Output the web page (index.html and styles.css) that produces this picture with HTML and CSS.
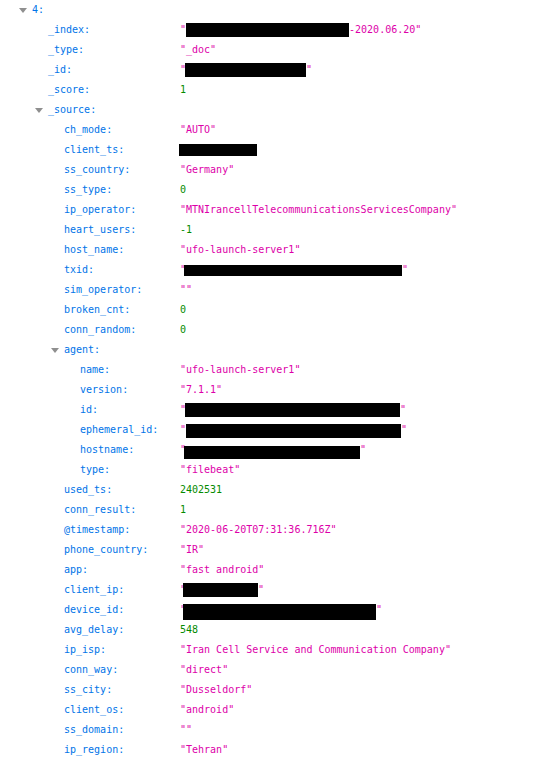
FILE: index.html
```html
<!DOCTYPE html>
<html>
<head>
<meta charset="utf-8">
<link rel="stylesheet" href="styles.css">
</head>
<body>
<div class="tree">
  <div class="row"><div class="key l0"><span class="twisty"></span>4:</div><div class="val"></div></div>
  <div class="row"><div class="key l1">_index:</div><div class="val str"><span>"</span><span class="redact r-index"></span><span>-2020.06.20"</span></div></div>
  <div class="row"><div class="key l1">_type:</div><div class="val str">"_doc"</div></div>
  <div class="row"><div class="key l1">_id:</div><div class="val str"><span>"</span><span class="redact r-id"></span><span>"</span></div></div>
  <div class="row"><div class="key l1">_score:</div><div class="val num">1</div></div>
  <div class="row"><div class="key l1"><span class="twisty"></span>_source:</div><div class="val"></div></div>
  <div class="row"><div class="key l2">ch_mode:</div><div class="val str">"AUTO"</div></div>
  <div class="row"><div class="key l2">client_ts:</div><div class="val"><span class="redact r-cts"></span></div></div>
  <div class="row"><div class="key l2">ss_country:</div><div class="val str">"Germany"</div></div>
  <div class="row"><div class="key l2">ss_type:</div><div class="val num">0</div></div>
  <div class="row"><div class="key l2">ip_operator:</div><div class="val str">"MTNIrancellTelecommunicationsServicesCompany"</div></div>
  <div class="row"><div class="key l2">heart_users:</div><div class="val num">-1</div></div>
  <div class="row"><div class="key l2">host_name:</div><div class="val str">"ufo-launch-server1"</div></div>
  <div class="row"><div class="key l2">txid:</div><div class="val str"><span>"</span><span class="redact r-txid"></span><span>"</span></div></div>
  <div class="row"><div class="key l2">sim_operator:</div><div class="val str">""</div></div>
  <div class="row"><div class="key l2">broken_cnt:</div><div class="val num">0</div></div>
  <div class="row"><div class="key l2">conn_random:</div><div class="val num">0</div></div>
  <div class="row"><div class="key l2"><span class="twisty"></span>agent:</div><div class="val"></div></div>
  <div class="row"><div class="key l3">name:</div><div class="val str">"ufo-launch-server1"</div></div>
  <div class="row"><div class="key l3">version:</div><div class="val str">"7.1.1"</div></div>
  <div class="row"><div class="key l3">id:</div><div class="val str"><span>"</span><span class="redact r-aid"></span><span>"</span></div></div>
  <div class="row"><div class="key l3">ephemeral_id:</div><div class="val str"><span>"</span><span class="redact r-eph"></span><span>"</span></div></div>
  <div class="row"><div class="key l3">hostname:</div><div class="val str"><span>"</span><span class="redact r-host"></span><span>"</span></div></div>
  <div class="row"><div class="key l3">type:</div><div class="val str">"filebeat"</div></div>
  <div class="row"><div class="key l2">used_ts:</div><div class="val num">2402531</div></div>
  <div class="row"><div class="key l2">conn_result:</div><div class="val num">1</div></div>
  <div class="row"><div class="key l2">@timestamp:</div><div class="val str">"2020-06-20T07:31:36.716Z"</div></div>
  <div class="row"><div class="key l2">phone_country:</div><div class="val str">"IR"</div></div>
  <div class="row"><div class="key l2">app:</div><div class="val str">"fast android"</div></div>
  <div class="row"><div class="key l2">client_ip:</div><div class="val str"><span>"</span><span class="redact r-cip"></span><span>"</span></div></div>
  <div class="row"><div class="key l2">device_id:</div><div class="val str"><span>"</span><span class="redact r-dev"></span><span>"</span></div></div>
  <div class="row"><div class="key l2">avg_delay:</div><div class="val num">548</div></div>
  <div class="row"><div class="key l2">ip_isp:</div><div class="val str">"Iran Cell Service and Communication Company"</div></div>
  <div class="row"><div class="key l2">conn_way:</div><div class="val str">"direct"</div></div>
  <div class="row"><div class="key l2">ss_city:</div><div class="val str">"Dusseldorf"</div></div>
  <div class="row"><div class="key l2">client_os:</div><div class="val str">"android"</div></div>
  <div class="row"><div class="key l2">ss_domain:</div><div class="val str">""</div></div>
  <div class="row"><div class="key l2">ip_region:</div><div class="val str">"Tehran"</div></div>
</div>
</body>
</html>
```
FILE: styles.css
```css
html, body {
  margin: 0;
  padding: 0;
  background: #ffffff;
}
.tree {
  font-family: "DejaVu Sans Mono", "Liberation Mono", monospace;
  font-size: 10px;
  display: flex;
  flex-direction: column;
}
.row {
  display: flex;
  height: 20px;
  line-height: 20px;
}
.key {
  width: 180px;
  box-sizing: border-box;
  color: #0074e8;
  white-space: pre;
  display: flex;
  align-items: center;
}
.l0 { padding-left: 32px; }
.l1 { padding-left: 48px; }
.l2 { padding-left: 64px; }
.l3 { padding-left: 80px; }
.twisty {
  width: 0;
  height: 0;
  border-left: 4px solid transparent;
  border-right: 4px solid transparent;
  border-top: 5px solid #8f8f8f;
  margin-left: -13px;
  margin-right: 5px;
  margin-top: 1px;
}
.val {
  display: flex;
  align-items: center;
  white-space: pre;
}
.str { color: #dd00a9; }
.num { color: #058b00; }
.redact {
  display: inline-block;
  background: #000;
}
.r-index { width: 163px; height: 14px; }
.r-id { width: 121px; height: 14px; margin-left: -1px; }
.r-cts { width: 78px; height: 12px; margin-left: -1px; }
.r-txid { width: 218px; height: 11px; margin-left: -2px; }
.r-aid { width: 215px; height: 14px; margin-left: -1px; }
.r-eph { width: 215px; height: 14px; margin-top: 1px; }
.r-host { width: 176px; height: 13px; margin-left: -2px; margin-top: 4px; }
.r-cip { width: 75px; height: 14px; margin-left: -3px; }
.r-dev { width: 193px; height: 16px; margin-left: -3px; margin-top: 4px; }
```
